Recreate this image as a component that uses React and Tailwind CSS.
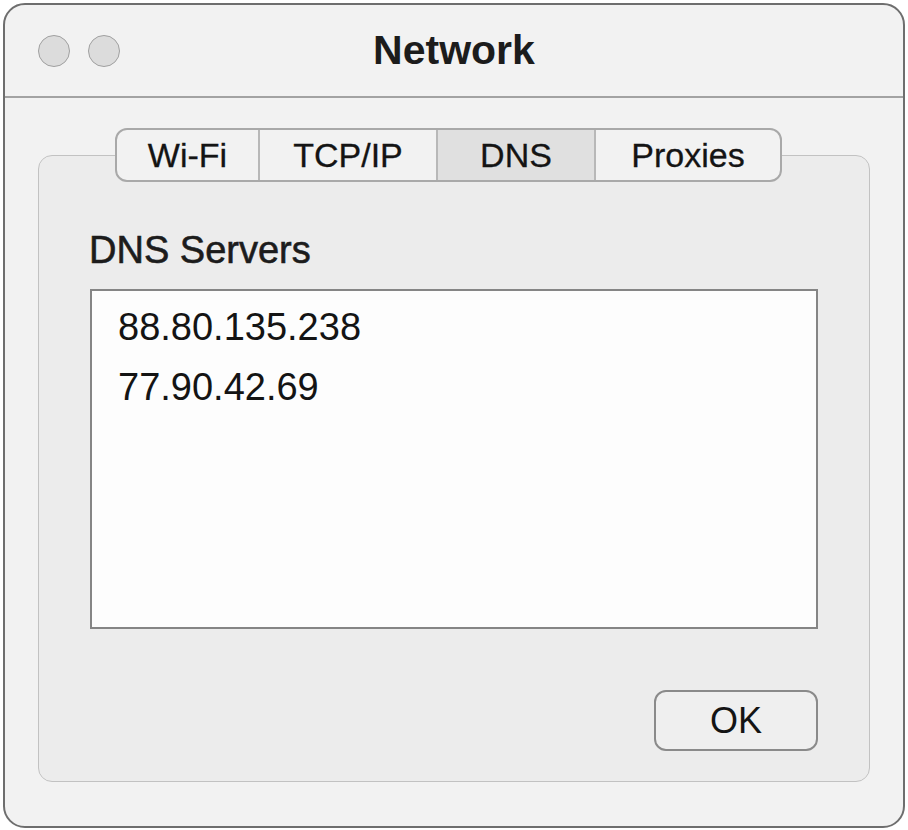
export default function App() {
  const font = { fontFamily: '"Liberation Sans", Arial, sans-serif' };
  return (
    <div className="w-[908px] h-[830px] bg-white pt-[3px] pl-[3px]" style={font}>
      <div className="w-[902px] h-[825px] border-2 border-[#6e6e6e] rounded-[22px] bg-[#f2f2f2] flex flex-col overflow-hidden">
        <div className="h-[93px] shrink-0 border-b-2 border-[#a3a3a3] grid grid-cols-[1fr_auto_1fr] items-center">
          <div className="flex items-center gap-[18px] pl-[33px]">
            <div className="w-[32px] h-[32px] rounded-full bg-[#dcdcdc] border border-[#a0a0a0]" />
            <div className="w-[32px] h-[32px] rounded-full bg-[#dcdcdc] border border-[#a0a0a0]" />
          </div>
          <div className="text-[41px] font-bold text-[#1c1c1c] leading-none">Network</div>
          <div />
        </div>
        <div className="flex-1 pt-[57px] px-[33px] pb-[44px] flex">
          <div className="flex-1 border border-[#c2c2c2] rounded-[14px] bg-[#ececec] flex flex-col">
            <div className="-mt-[28px] ml-[76px] flex">
              <div className="flex h-[54px] rounded-[12px] border-2 border-[#a9a9a9] overflow-hidden bg-[#f2f2f2] text-[34px] text-[#141414] [-webkit-text-stroke:0.3px_#141414]">
                <div className="w-[141px] flex items-center justify-center">Wi-Fi</div>
                <div className="w-[178px] flex items-center justify-center border-l-2 border-[#b8b8b8]">TCP/IP</div>
                <div className="w-[158px] flex items-center justify-center border-l-2 border-[#b8b8b8] bg-[#e0e0e0]">DNS</div>
                <div className="w-[186px] flex items-center justify-center border-l-2 border-[#b8b8b8]">Proxies</div>
              </div>
            </div>
            <div className="pl-[50px] mt-[46px] text-[38px] leading-[44px] text-[#1c1c1c] [-webkit-text-stroke:0.6px_#1c1c1c]">DNS Servers</div>
            <div className="mx-[51px] mt-[17px] h-[340px] border-2 border-[#858585] bg-[#fdfdfd] pl-[26px] pt-[6px] text-[38px] leading-[60px] text-[#141414]">
              <div>88.80.135.238</div>
              <div>77.90.42.69</div>
            </div>
            <div className="flex justify-end mr-[51px] mt-[61px]">
              <div className="w-[164px] h-[61px] rounded-[12px] border-2 border-[#8a8a8a] bg-[#efefef] flex items-center justify-center text-[36px] text-[#141414]">
                OK
              </div>
            </div>
          </div>
        </div>
      </div>
    </div>
  );
}
